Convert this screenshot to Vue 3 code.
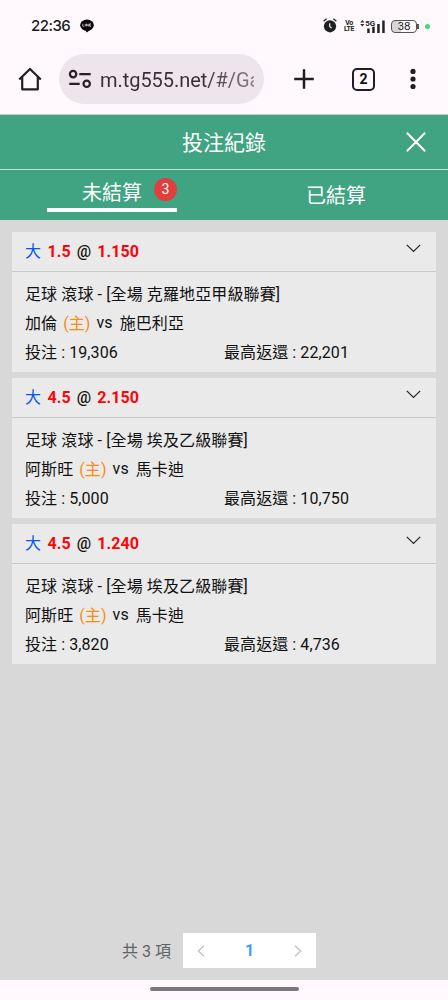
<script setup>
const bets = [
  { line: '1.5', odds: '1.150', league: '克羅地亞甲級聯賽', home: '加倫', away: '施巴利亞', stake: '19,306', payout: '22,201' },
  { line: '4.5', odds: '2.150', league: '埃及乙級聯賽', home: '阿斯旺', away: '馬卡迪', stake: '5,000', payout: '10,750' },
  { line: '4.5', odds: '1.240', league: '埃及乙級聯賽', home: '阿斯旺', away: '馬卡迪', stake: '3,820', payout: '4,736' },
]
</script>

<template>
  <div class="phone">
    <div class="status">
      <span class="clock">22:36</span>
      <svg class="line-icon" width="14" height="14" viewBox="0 0 14 14">
        <ellipse cx="7" cy="6.200" rx="6.800" ry="5.700" fill="#080608" />
        <path d="M5.500 11.500 6.800 13.400 10 11z" fill="#080608" />
        <path d="M2.800 4.800v2.500h1.400M5.300 4.800v2.500M6.500 7.300V4.800l1.800 2.500V4.800M11 4.800H9.600v2.500H11M9.600 6H11" fill="none" stroke="#d8d4d8" stroke-width=".8" />
      </svg>
      <svg class="alarm" width="14" height="15" viewBox="0 0 14 15">
        <circle cx="7" cy="8.300" r="6.100" fill="#201f21" />
        <path d="M.6 3.200 3.600.8M13.400 3.200 10.400.8" stroke="#201f21" stroke-width="1.300" fill="none" />
        <path d="M6.700 5.200v3.300l2 1.600" stroke="#f4f0f4" stroke-width="1.200" fill="none" />
      </svg>
      <div class="volte"><span>Vo</span><span>LTE</span></div>
      <svg class="signal" width="26" height="15" viewBox="0 0 26 15">
        <path d="M.2 3.500 2.300 1 4.400 3.500zM.2 5h4.200L2.300 7.500z" fill="#302e31" />
        <path d="M7.200 9.500h2.500v4.500H7.200zM12.200 7.500h2.500V14h-2.500zM17.200 5h2.500v9h-2.500zM22.200 1.500h2.500V14h-2.500z" fill="#252326" />
        <text x="5.200" y="7" class="fiveg">5G</text>
      </svg>
      <div class="battery"><span>38</span></div>
      <i class="battery-tip"></i>
      <i class="dot"></i>
    </div>

    <div class="toolbar">
      <svg class="home" width="24" height="24" viewBox="0 0 24 24">
        <path d="M1.200 12.500 12 2l10.800 10.500M4.200 10.200v12.100h15.600V10.200" fill="none" stroke="#211f22" stroke-width="2.200" stroke-linejoin="round" />
      </svg>
      <div class="address">
        <svg width="24" height="20" viewBox="0 0 24 20">
          <g fill="none" stroke="#252126" stroke-width="2.200">
            <circle cx="5.100" cy="5.100" r="3.200" />
            <circle cx="18.700" cy="14.800" r="3.200" />
            <path d="M11.300 5.100H22.700M1.300 14.800h10.400" />
          </g>
        </svg>
        <span class="url">m.tg555.net/#/Ga</span>
      </div>
      <svg class="plus" width="20" height="20" viewBox="0 0 20 20"><path d="M10 .2v19.600M.2 10h19.600" stroke="#201e21" stroke-width="2.500" /></svg>
      <div class="tabs-count">2</div>
      <svg class="more" width="6" height="22" viewBox="0 0 6 22"><g fill="#201e21"><circle cx="3" cy="3.400" r="2.600" /><circle cx="3" cy="11" r="2.600" /><circle cx="3" cy="18.500" r="2.600" /></g></svg>
    </div>

    <header class="title">
      <h1>投注紀錄</h1>
      <svg class="close" width="20" height="20" viewBox="0 0 20 20"><path d="M.8.8 19.200 19.200M19.200.8.8 19.200" stroke="#fff" stroke-width="2" /></svg>
    </header>
    <nav class="tabs">
      <div class="tab active"><div class="label">未結算<b>3</b></div></div>
      <div class="tab">已結算</div>
    </nav>

    <main>
      <section v-for="(bet, i) in bets" :key="i" class="card">
        <div class="card-head">
          <span class="pick">大</span><b class="red">{{ bet.line }}</b><b class="at">@</b><b class="red">{{ bet.odds }}</b>
          <svg class="chevron" width="15" height="9" viewBox="0 0 15 9"><path d="M.8.9 7.500 7.500 14.200.9" fill="none" stroke="#222" stroke-width="1.200" /></svg>
        </div>
        <div class="card-body">
          <div class="league">足球 滾球 - [全場 {{ bet.league }}]</div>
          <div class="teams"><span>{{ bet.home }}</span><span class="host">(主)</span><span class="versus">vs</span><span>{{ bet.away }}</span></div>
          <div class="amounts"><span>投注 : {{ bet.stake }}</span><span>最高返還 : {{ bet.payout }}</span></div>
        </div>
      </section>
      <footer class="paging">
        <span class="total">共 3 項</span>
        <div class="pager">
          <svg width="8" height="12" viewBox="0 0 8 12"><path d="M7 .8 1.400 6 7 11.200" fill="none" stroke="#bfc3ca" stroke-width="1.400" /></svg>
          <b>1</b>
          <svg width="8" height="12" viewBox="0 0 8 12"><path d="M1 .8 6.600 6 1 11.200" fill="none" stroke="#bfc3ca" stroke-width="1.400" /></svg>
        </div>
      </footer>
    </main>
    <div class="gesture"><i></i></div>
  </div>
</template>

<style>
body { margin: 0; overflow: hidden; }
</style>

<style scoped>
* { box-sizing: border-box; }
.phone { width: 448px; height: 1000px; display: flex; flex-direction: column; overflow: hidden; background: #fff9fe; color: #111; font-family: Roboto, "Noto Sans CJK TC", sans-serif; font-size: 16px; }
svg { display: block; flex: none; }
.status { height: 52px; flex: none; display: flex; align-items: center; padding-left: 31px; }
.clock { width: 40px; flex: none; font: 500 15px/20px Inter, Roboto, sans-serif; letter-spacing: -.55px; white-space: nowrap; color: #1a1a1a; }
.line-icon { margin: -1px 0 0 9px; }
.alarm { margin: -1px 0 0 229px; }
.volte { width: 10px; margin-left: 7px; display: flex; flex-direction: column; align-items: center; font: 700 7px/6.500px Roboto, sans-serif; letter-spacing: -.5px; color: #222; }
.signal { margin-left: 6px; margin-top: 1px; }
.fiveg { font: 700 8px Roboto, sans-serif; fill: #222; stroke: #fff9fe; stroke-width: 1px; paint-order: stroke; }
.battery { width: 26px; height: 13px; margin-left: 5px; border: 1px solid #555; border-radius: 4px; background: linear-gradient(90deg, #d9d6d9 38%, #fff9fe 38%); font: 10.500px/11px Inter, sans-serif; text-align: center; color: #222; }
.battery-tip { width: 1.500px; height: 5px; background: #555; }
.dot { width: 5px; height: 5px; margin-left: 6px; border-radius: 50%; background: #3bd981; }
.toolbar { height: 63px; flex: none; display: flex; align-items: flex-start; padding: 2px 0 0 18px; border-bottom: 1px solid #c8c8c8; }
.home { margin-top: 13px; }
.address { width: 205px; height: 50px; margin-left: 17px; padding-left: 9px; border-radius: 25px; display: flex; align-items: center; background: #eee5ec; }
.url { width: 154px; margin: 1px 0 0 8px; overflow: hidden; white-space: nowrap; font-size: 20px; line-height: 28px; letter-spacing: -.05px; background: linear-gradient(90deg, #342f36 66%, #57515a 80%, #8b828b); -webkit-background-clip: text; background-clip: text; -webkit-text-fill-color: transparent; }
.plus { margin: 15px 0 0 30px; }
.tabs-count { width: 23px; height: 23px; margin: 14px 0 0 38px; border: 2.400px solid #201e21; border-radius: 5px; font: 700 14px/19px Roboto, sans-serif; text-align: center; }
.more { margin: 14px 0 0 35px; }
.title { height: 55px; flex: none; display: grid; grid-template-columns: 42px 1fr 42px; align-items: center; color: #fff; background: #40a381; border-bottom: 1px solid #c7ddd5; }
h1 { grid-column: 2; margin: 1px 0 0; text-align: center; font-size: 21px; font-weight: 400; line-height: 30px; }
.close { margin: -1px 0 0; }
.tabs { height: 50px; flex: none; display: grid; grid-template-columns: 1fr 1fr; color: #fff; background: #40a381; font-size: 20px; line-height: 30px; }
.tab { display: flex; justify-content: center; padding-top: 11px; }
.active { padding-top: 8px; }
.label { width: 130px; height: 34px; display: flex; padding-left: 35px; border-bottom: 4px solid #fff; }
.label b { width: 23px; height: 23px; margin-left: 12px; border-radius: 50%; background: #dd403d; font-size: 14px; font-weight: 400; line-height: 23px; text-align: center; }
main { flex: 1; display: flex; flex-direction: column; gap: 6px; padding: 12px 12px 0; background: #d8d8d8; }
.card { height: 140px; flex: none; background: #eaeaea; }
.card-head { height: 40px; display: flex; align-items: center; padding: 0 15px 0 13px; border-bottom: 1px solid #c9c9c9; line-height: 24px; }
.pick { color: #0757ed; margin-right: 6.500px; }
.red { color: #fc0508; letter-spacing: .1px; }
.at { margin: 0 6px; font-weight: 500; }
.chevron { margin: -7px 0 0 auto; }
.card-body { padding: 8px 13px 0; line-height: 29px; white-space: nowrap; letter-spacing: .08px; }
.league { letter-spacing: .11px; }
.teams { display: flex; }
.host { margin-left: 6px; color: #f98c15; }
.versus { margin: -1px 7px 0 6px; }
.amounts { display: grid; grid-template-columns: 199px 1fr; }
.paging { margin-top: auto; padding-bottom: 12px; display: flex; align-items: center; justify-content: center; padding-right: 10px; color: #606266; }
.total { margin: -2px 12px 0 0; }
.pager { width: 133px; height: 35px; display: flex; align-items: center; justify-content: space-between; padding: 0 14px; background: #fff; color: #409eff; }
.gesture { height: 20px; flex: none; display: flex; justify-content: center; padding-top: 7px; }
.gesture i { width: 149px; height: 4px; border-radius: 2px; background: #7c777d; }
</style>
